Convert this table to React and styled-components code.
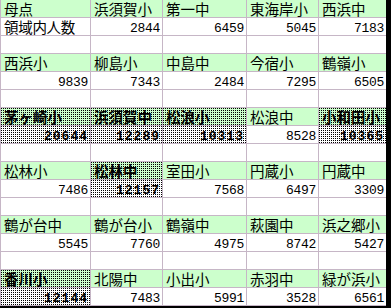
import React from "react";
import styled, { createGlobalStyle } from "styled-components";

const GlobalStyle = createGlobalStyle`
  html, body {
    margin: 0;
    padding: 0;
    background: #000;
  }
`;

const groups = [
  {
    names: ["母点", "浜須賀小", "第一中", "東海岸小", "西浜中"],
    values: ["領域内人数", 2844, 6459, 5045, 7183],
  },
  {
    names: ["西浜小", "柳島小", "中島中", "今宿小", "鶴嶺小"],
    values: [9839, 7343, 2484, 7295, 6505],
  },
  {
    names: ["茅ヶ崎小", "浜須賀中", "松浪小", "松浪中", "小和田小"],
    values: [20644, 12289, 10313, 8528, 10365],
    marked: [0, 1, 2, 4],
  },
  {
    names: ["松林小", "松林中", "室田小", "円蔵小", "円蔵中"],
    values: [7486, 12157, 7568, 6497, 3309],
    marked: [1],
  },
  {
    names: ["鶴が台中", "鶴が台小", "鶴嶺中", "萩園中", "浜之郷小"],
    values: [5545, 7760, 4975, 8742, 5427],
  },
  {
    names: ["香川小", "北陽中", "小出小", "赤羽中", "緑が浜小"],
    values: [12144, 7483, 5991, 3528, 6561],
    marked: [0],
  },
];

export default function App() {
  return (
    <>
      <GlobalStyle />
      <Sheet>
        {groups.map((group, g) => (
          <React.Fragment key={`group${g}`}>
            {group.names.map((name, i) => (
              <NameCell key={`name${g}-${i}`} $marked={group.marked?.includes(i)}>
                {name}
              </NameCell>
            ))}
            {group.values.map((value, i) => (
              <ValueCell
                key={`value${g}-${i}`}
                $marked={group.marked?.includes(i)}
                $text={typeof value === "string"}
              >
                {value}
              </ValueCell>
            ))}
            {g < groups.length - 1 &&
              group.names.map((_, i) => <BlankCell key={`blank${g}-${i}`} />)}
          </React.Fragment>
        ))}
      </Sheet>
    </>
  );
}

// 1px black dot in every 2x2 tile: a 1px column, its lower half covered by the fill
const dots = (fill) => `
  background-image:
    linear-gradient(to bottom, transparent 1px, ${fill} 1px),
    linear-gradient(to right, #000 1px, transparent 1px);
  background-size: 2px 2px;
`;

const Sheet = styled.div`
  display: grid;
  grid-template-columns: 89px 71px 83px 71px 67px;
  grid-auto-rows: 17px;
  gap: 1px;
  width: 385px;
  padding: 0 0 1px 1px;
  background: #c6b6c6;
`;

const Cell = styled.div`
  white-space: nowrap;
  height: 17px;
  line-height: 17px;
  color: #000;
  box-sizing: border-box;
`;

const NameCell = styled(Cell)`
  background-color: #ccffcc;
  padding-left: 3px;
  font-family: "Noto Sans CJK JP", sans-serif;
  font-size: 14.5px;
  font-weight: ${(p) => (p.$marked ? 700 : 400)};
  ${(p) => p.$marked && dots("#ccffcc")}
`;

const ValueCell = styled(Cell)`
  background-color: #fff;
  text-align: ${(p) => (p.$text ? "left" : "right")};
  padding: ${(p) => (p.$text ? "0 2px 0 3px" : "2px 2px 0 3px")};
  font-family: ${(p) =>
    p.$text ? `"Noto Sans CJK JP", sans-serif` : `"Liberation Mono", monospace`};
  font-size: ${(p) => (p.$text ? "14.5px" : "13px")};
  letter-spacing: ${(p) => (p.$marked ? "1px" : "-0.3px")};
  font-weight: ${(p) => (p.$marked ? 700 : 400)};
  ${(p) => p.$marked && dots("#fff")}
`;

const BlankCell = styled(Cell)`
  background-color: #fff;
`;
